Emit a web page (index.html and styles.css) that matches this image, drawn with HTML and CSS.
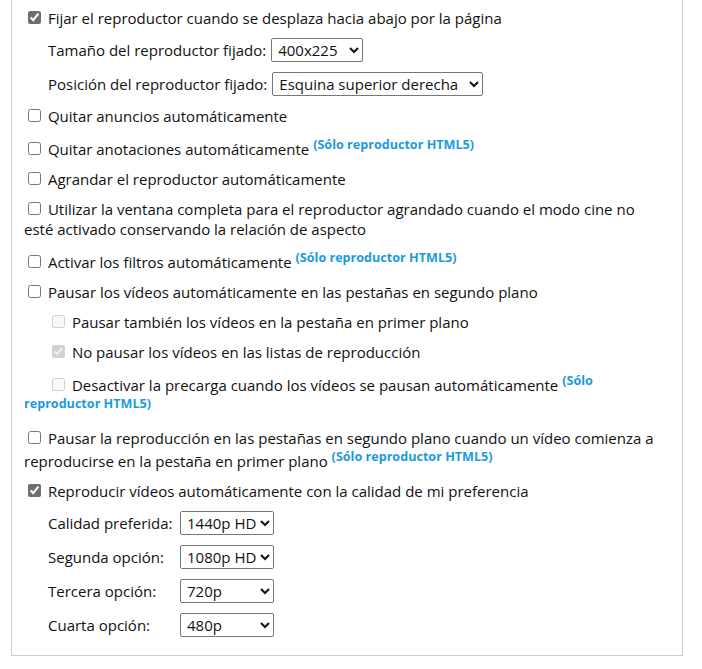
FILE: index.html
```html
<!DOCTYPE html>
<html lang="es">
<head>
    <meta charset="UTF-8">
    <meta name="viewport" content="width=device-width, initial-scale=1.0">
    <title>Opciones del reproductor</title>
    <link rel="stylesheet" href="styles.css">
</head>
<body>
    <div class="panel">
        <div class="option">
            <label><input type="checkbox" checked> Fijar el reproductor cuando se desplaza hacia abajo por la página</label>
        </div>
        <div class="field">
            <label for="float_size">Tamaño del reproductor fijado:</label>
            <select id="float_size" class="sel-size">
                <option>400x225</option>
                <option>480x270</option>
                <option>640x360</option>
            </select>
        </div>
        <div class="field">
            <label for="float_pos">Posición del reproductor fijado:</label>
            <select id="float_pos" class="sel-pos">
                <option>Esquina superior derecha</option>
                <option>Esquina superior izquierda</option>
                <option>Esquina inferior derecha</option>
                <option>Esquina inferior izquierda</option>
            </select>
        </div>

        <div class="option">
            <label><input type="checkbox"> Quitar anuncios automáticamente</label>
        </div>
        <div class="option">
            <label><input type="checkbox"> Quitar anotaciones automáticamente</label> <sup class="note">(Sólo reproductor HTML5)</sup>
        </div>
        <div class="option">
            <label><input type="checkbox"> Agrandar el reproductor automáticamente</label>
        </div>
        <div class="option">
            <label><input type="checkbox"> Utilizar la ventana completa para el reproductor agrandado cuando el modo cine no esté activado conservando la relación de aspecto</label>
        </div>
        <div class="option">
            <label><input type="checkbox"> Activar los filtros automáticamente</label> <sup class="note">(Sólo reproductor HTML5)</sup>
        </div>
        <div class="option">
            <label><input type="checkbox"> Pausar los vídeos automáticamente en las pestañas en segundo plano</label>
        </div>
        <div class="option sub">
            <label><input type="checkbox" disabled> Pausar también los vídeos en la pestaña en primer plano</label>
        </div>
        <div class="option sub">
            <label><input type="checkbox" checked disabled> No pausar los vídeos en las listas de reproducción</label>
        </div>
        <div class="option sub">
            <label><input type="checkbox" disabled> Desactivar la precarga cuando los vídeos se pausan automáticamente</label> <sup class="note">(Sólo reproductor HTML5)</sup>
        </div>
        <div class="option">
            <label><input type="checkbox"> Pausar la reproducción en las pestañas en segundo plano cuando un vídeo comienza a reproducirse en la pestaña en primer plano</label> <sup class="note">(Sólo reproductor HTML5)</sup>
        </div>

        <div class="option">
            <label><input type="checkbox" checked> Reproducir vídeos automáticamente con la calidad de mi preferencia</label>
        </div>
        <div class="field quality">
            <label for="q1">Calidad preferida:</label>
            <select id="q1" class="sel-q">
                <option>1440p HD</option>
                <option>1080p HD</option>
                <option>720p</option>
                <option>480p</option>
            </select>
        </div>
        <div class="field quality">
            <label for="q2">Segunda opción:</label>
            <select id="q2" class="sel-q">
                <option>1080p HD</option>
                <option>720p</option>
                <option>480p</option>
            </select>
        </div>
        <div class="field quality">
            <label for="q3">Tercera opción:</label>
            <select id="q3" class="sel-q">
                <option>720p</option>
                <option>480p</option>
                <option>360p</option>
            </select>
        </div>
        <div class="field quality">
            <label for="q4">Cuarta opción:</label>
            <select id="q4" class="sel-q">
                <option>480p</option>
                <option>360p</option>
                <option>240p</option>
            </select>
        </div>
    </div>
</body>
</html>
```

FILE: styles.css
```css
body {
    background-color: #ffffff;
    color: #111111;
    font-family: "Open Sans", "Noto Sans", sans-serif;
    font-size: 15px;
    line-height: 20px;
    margin: 0;
}
.panel {
    width: 672px;
    box-sizing: border-box;
    margin: -5px 0 0 11px;
    padding: 12px 17px 18px 12px;
    border: 1px solid #cccccc; /* light gray frame */
    display: flex;
    flex-direction: column;
    gap: 10px;
}
input[type="checkbox"] {
    accent-color: #6e6e6e; /* gray ticks instead of blue */
    width: 13px;
    height: 13px;
    margin: 3px 3px 3px 4px;
}
/* nested options: only the first line is pushed in, wrapped text goes back to the edge */
.sub input[type="checkbox"] {
    margin-left: 28px;
}
.field {
    display: flex;
    align-items: center;
    gap: 5px;
    padding-left: 24px;
    height: 24px;
}
.field.quality label {
    width: 127px;
}
select {
    font-family: inherit;
    font-size: 15px;
    color: #111111;
    background-color: #ffffff;
    height: 24px;
    border: 1px solid #767676;
    border-radius: 2px;
    padding: 0 0 0 2px;
}
.sel-size {
    width: 92px;
}
.sel-pos {
    width: 211px;
}
.sel-q {
    width: 94px;
}
.note {
    color: #1a9ae0; /* blue HTML5 hint */
    font-size: 12.6px;
    font-weight: bold;
    line-height: normal;
}
```
